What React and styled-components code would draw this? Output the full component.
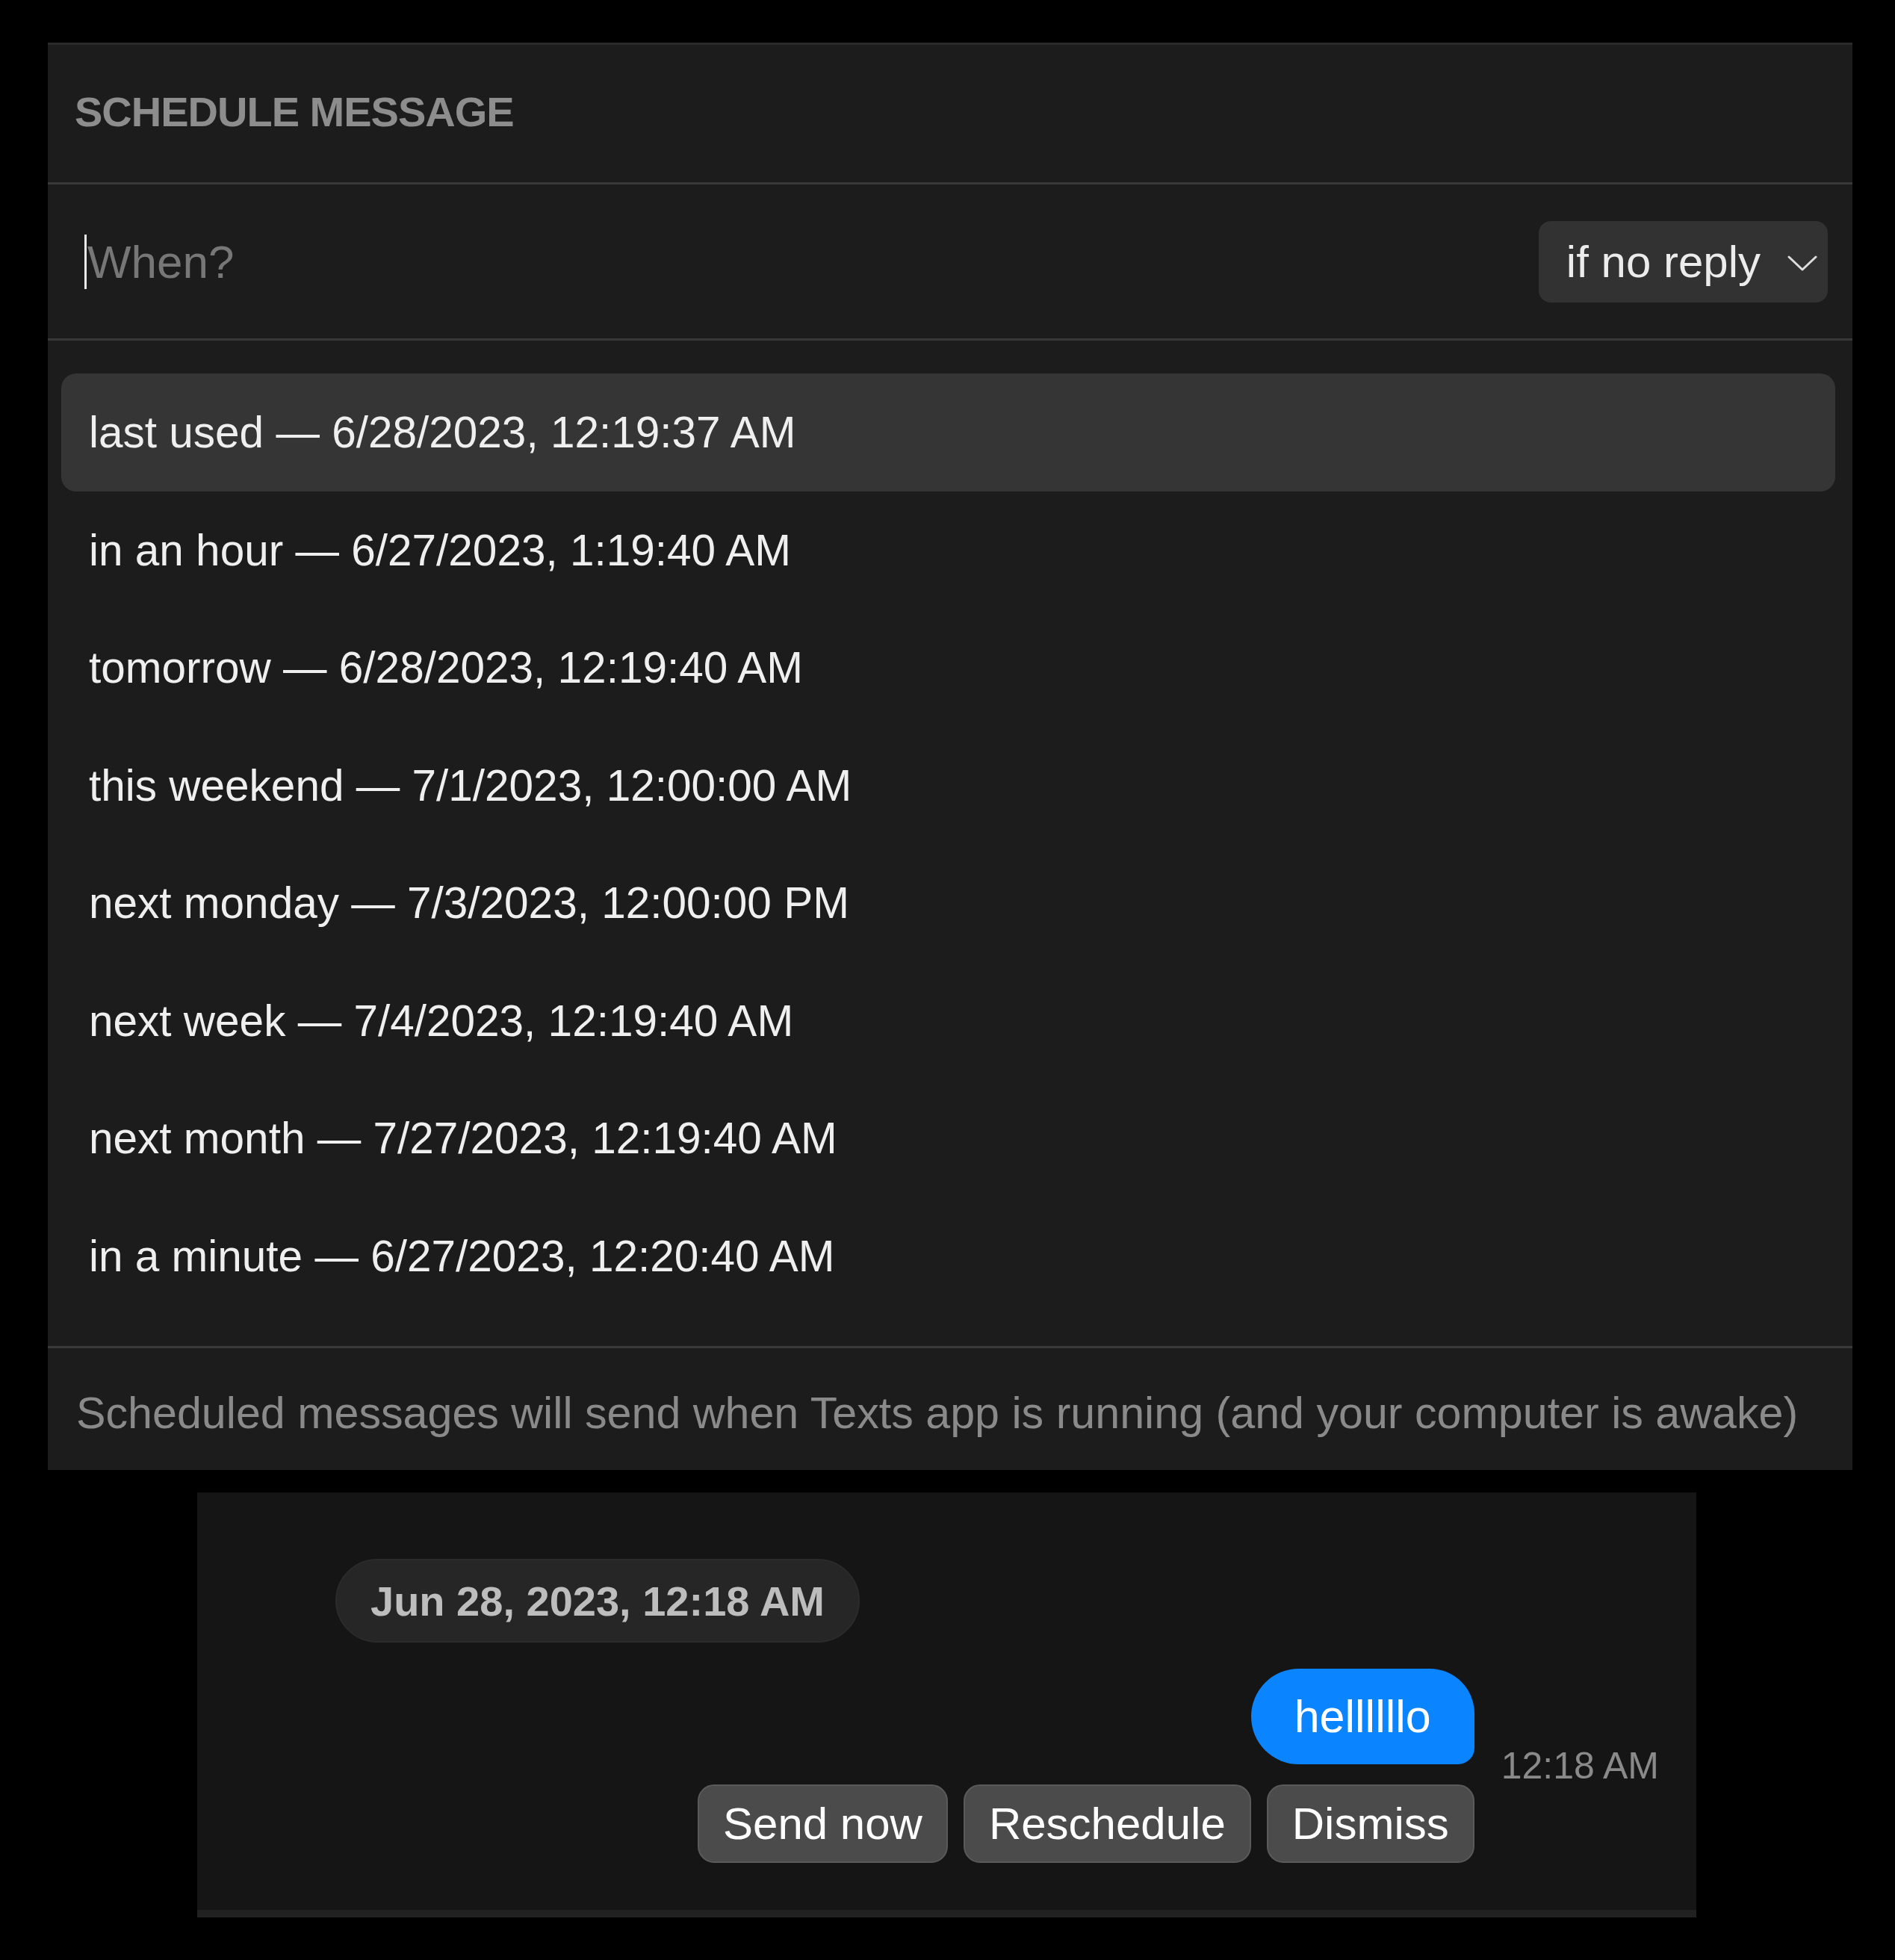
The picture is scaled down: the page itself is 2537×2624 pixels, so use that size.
import styled, { createGlobalStyle } from 'styled-components';

const GlobalStyle = createGlobalStyle`
  * { box-sizing: border-box; }
  html, body {
    margin: 0;
    padding: 0;
    background: #000;
    font-family: "Liberation Sans", Arial, sans-serif;
  }
`;

const OPTIONS = [
  'last used — 6/28/2023, 12:19:37 AM',
  'in an hour — 6/27/2023, 1:19:40 AM',
  'tomorrow — 6/28/2023, 12:19:40 AM',
  'this weekend — 7/1/2023, 12:00:00 AM',
  'next monday — 7/3/2023, 12:00:00 PM',
  'next week — 7/4/2023, 12:19:40 AM',
  'next month — 7/27/2023, 12:19:40 AM',
  'in a minute — 6/27/2023, 12:20:40 AM',
];

const ACTIONS = ['Send now', 'Reschedule', 'Dismiss'];

const App = () => {
  return (
    <Page>
      <GlobalStyle />
      <SchedulePanel>
        <PanelHeader>SCHEDULE MESSAGE</PanelHeader>
        <WhenRow>
          <Caret />
          <WhenInput placeholder="When?" readOnly />
          <ModeSelect>
            if no reply
            <svg width="40" height="22" viewBox="0 0 40 22" fill="none">
              <polyline points="2,3 20,20 38,3" stroke="#dedede" strokeWidth="3" strokeLinecap="round" strokeLinejoin="round" />
            </svg>
          </ModeSelect>
        </WhenRow>
        <OptionList>
          {OPTIONS.map((text, i) => (
            <Option key={text} active={i === 0}>{text}</Option>
          ))}
        </OptionList>
        <PanelFooter>
          Scheduled messages will send when Texts app is running (and your computer is awake)
        </PanelFooter>
      </SchedulePanel>

      <ThreadPanel>
        <DatePill>Jun 28, 2023, 12:18 AM</DatePill>
        <MessageRow>
          <MessageColumn>
            <Bubble>hellllllo</Bubble>
            <ActionRow>
              {ACTIONS.map(label => (
                <ActionButton key={label}>{label}</ActionButton>
              ))}
            </ActionRow>
          </MessageColumn>
          <Timestamp>12:18 AM</Timestamp>
        </MessageRow>
      </ThreadPanel>
    </Page>
  );
};

const Page = styled.div`
  width: 2537px;
  min-height: 2624px;
  padding-top: 57px;
  display: flex;
  flex-direction: column;
`;

/* schedule popover */
const SchedulePanel = styled.div`
  margin-left: 64px;
  width: 2416px;
  background: #1c1c1c;
  border-top: 3px solid #2a2a2a;
  display: flex;
  flex-direction: column;
`;
const PanelHeader = styled.div`
  height: 187px;
  padding: 0 0 6px 36px;
  display: flex;
  align-items: center;
  font-size: 56px;
  font-weight: 700;
  letter-spacing: -1px;
  color: #8d8d8d;
  border-bottom: 3px solid #383838;
`;
const WhenRow = styled.div`
  height: 209px;
  padding: 0 33px 0 49px;
  display: flex;
  align-items: center;
  border-bottom: 3px solid #383838;
`;
const Caret = styled.div`
  width: 3px;
  height: 73px;
  background: #e8e8e8;
  flex-shrink: 0;
`;
const WhenInput = styled.input`
  flex: 1;
  min-width: 0;
  background: transparent;
  border: none;
  outline: none;
  padding: 0;
  margin-left: 1px;
  font-family: inherit;
  font-size: 62px;
  color: #e8e8e8;
  &::placeholder {
    color: #777;
  }
`;
const ModeSelect = styled.div`
  height: 109px;
  padding: 0 14px 0 37px;
  display: flex;
  align-items: center;
  gap: 36px;
  background: #323232;
  border-radius: 16px;
  font-size: 60px;
  color: #ececec;
  svg {
    margin-top: 4px;
  }
`;
const OptionList = styled.div`
  padding: 44px 23px 42px 18px;
  display: flex;
  flex-direction: column;
  border-bottom: 3px solid #383838;
`;
const Option = styled.div`
  height: 157.5px;
  padding-left: 37px;
  display: flex;
  align-items: center;
  border-radius: 20px;
  font-size: 58.5px;
  color: #efefef;
  background: ${p => (p.active ? '#353535' : 'transparent')};
`;
const PanelFooter = styled.div`
  height: 163px;
  padding: 10px 0 0 38px;
  display: flex;
  align-items: center;
  font-size: 59.2px;
  color: #8a8a8a;
  white-space: nowrap;
`;

/* thread preview */
const ThreadPanel = styled.div`
  margin: 30px 0 0 264px;
  width: 2007px;
  height: 569px;
  padding: 89px 50px 0 185px;
  background: #151515;
  border-bottom: 10px solid #212121;
  display: flex;
  flex-direction: column;
  align-items: flex-start;
`;
const DatePill = styled.div`
  height: 112px;
  padding: 0 45px;
  display: flex;
  align-items: center;
  background: #262626;
  border: 2px solid #2b2b2b;
  border-radius: 56px;
  font-size: 56px;
  font-weight: 700;
  color: #bdbdbd;
`;
const MessageRow = styled.div`
  align-self: stretch;
  margin-top: 35px;
  display: flex;
  justify-content: flex-end;
  align-items: center;
  gap: 36px;
`;
const MessageColumn = styled.div`
  display: flex;
  flex-direction: column;
  align-items: flex-end;
  gap: 27px;
`;
const Bubble = styled.div`
  height: 128px;
  padding: 0 58px;
  display: flex;
  align-items: center;
  background: #0a84ff;
  border-radius: 64px 60px 22px 64px;
  font-size: 61px;
  color: #fff;
`;
const ActionRow = styled.div`
  display: flex;
  gap: 21px;
`;
const ActionButton = styled.button`
  height: 105px;
  padding: 0 32px;
  background: #4b4b4b;
  border: 2px solid #5a5a5a;
  border-radius: 22px;
  font-family: inherit;
  font-size: 60px;
  color: #fff;
`;
const Timestamp = styled.div`
  font-size: 50px;
  color: #8a8a8a;
  white-space: nowrap;
`;

export default App;
